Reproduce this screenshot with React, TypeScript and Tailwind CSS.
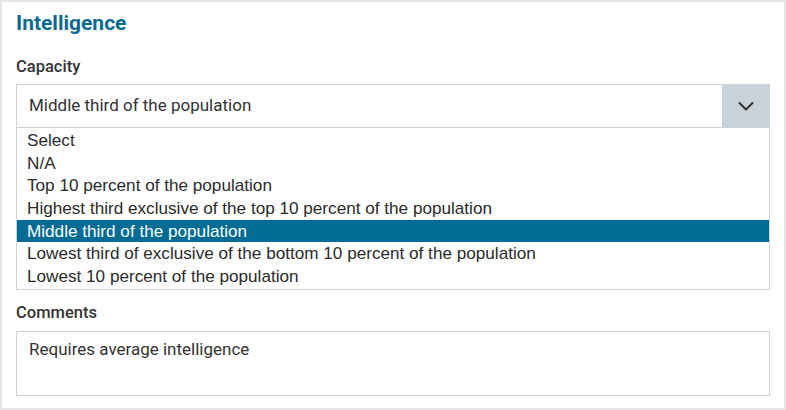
const options = [
  "Select",
  "N/A",
  "Top 10 percent of the population",
  "Highest third exclusive of the top 10 percent of the population",
  "Middle third of the population",
  "Lowest third of exclusive of the bottom 10 percent of the population",
  "Lowest 10 percent of the population",
];

export default function App() {
  const selected = "Middle third of the population";

  return (
    <div className="w-[786px] h-[410px] bg-[#e6e6e6] p-[2px] font-['Roboto',sans-serif]">
      <div className="w-[782px] h-[406px] bg-white pl-[14px] pr-[14px] pt-[8px] flex flex-col">
        <h2 className="text-[21px] leading-[26px] font-bold text-[#0b6a91]">Intelligence</h2>

        <label className="mt-[21px] text-[16.5px] leading-[20px] font-medium text-[#333]">Capacity</label>
        <div className="mt-[7px] w-[754px]">
          <div className="h-[44px] flex border border-[#cbd3da]">
            <div className="flex-1 flex items-center pl-[12px] text-[17px] text-[#333]">{selected}</div>
            <div className="w-[48px] bg-[#cad2d9] flex items-center justify-center -my-px -mr-px">
              <svg width="16" height="11" viewBox="0 0 16 11" fill="none" className="mt-px">
                <path d="M1.5 2 L8 8.5 L14.5 2" stroke="#2d2d2d" strokeWidth="1.9" strokeLinecap="round" strokeLinejoin="round" />
              </svg>
            </div>
          </div>
          <ul className="border border-t-0 border-[#cbd3da] font-['Liberation_Sans',Arial,sans-serif] text-[17.15px] text-[#2a2a2a] py-px">
            {options.map((opt) => (
              <li
                key={opt}
                className={`h-[22.7px] leading-[22.7px] pl-[10px] ${
                  opt === selected ? "bg-[#006b93] text-white" : ""
                }`}
              >
                {opt}
              </li>
            ))}
          </ul>
        </div>

        <label className="mt-[13px] text-[16.5px] leading-[20px] font-medium text-[#333]">Comments</label>
        <div className="mt-[8px] w-[754px] h-[65px] border border-[#cbd3da] pl-[12px] pt-[6px] text-[17px] leading-[22px] text-[#333]">
          Requires average intelligence
        </div>
      </div>
    </div>
  );
}
